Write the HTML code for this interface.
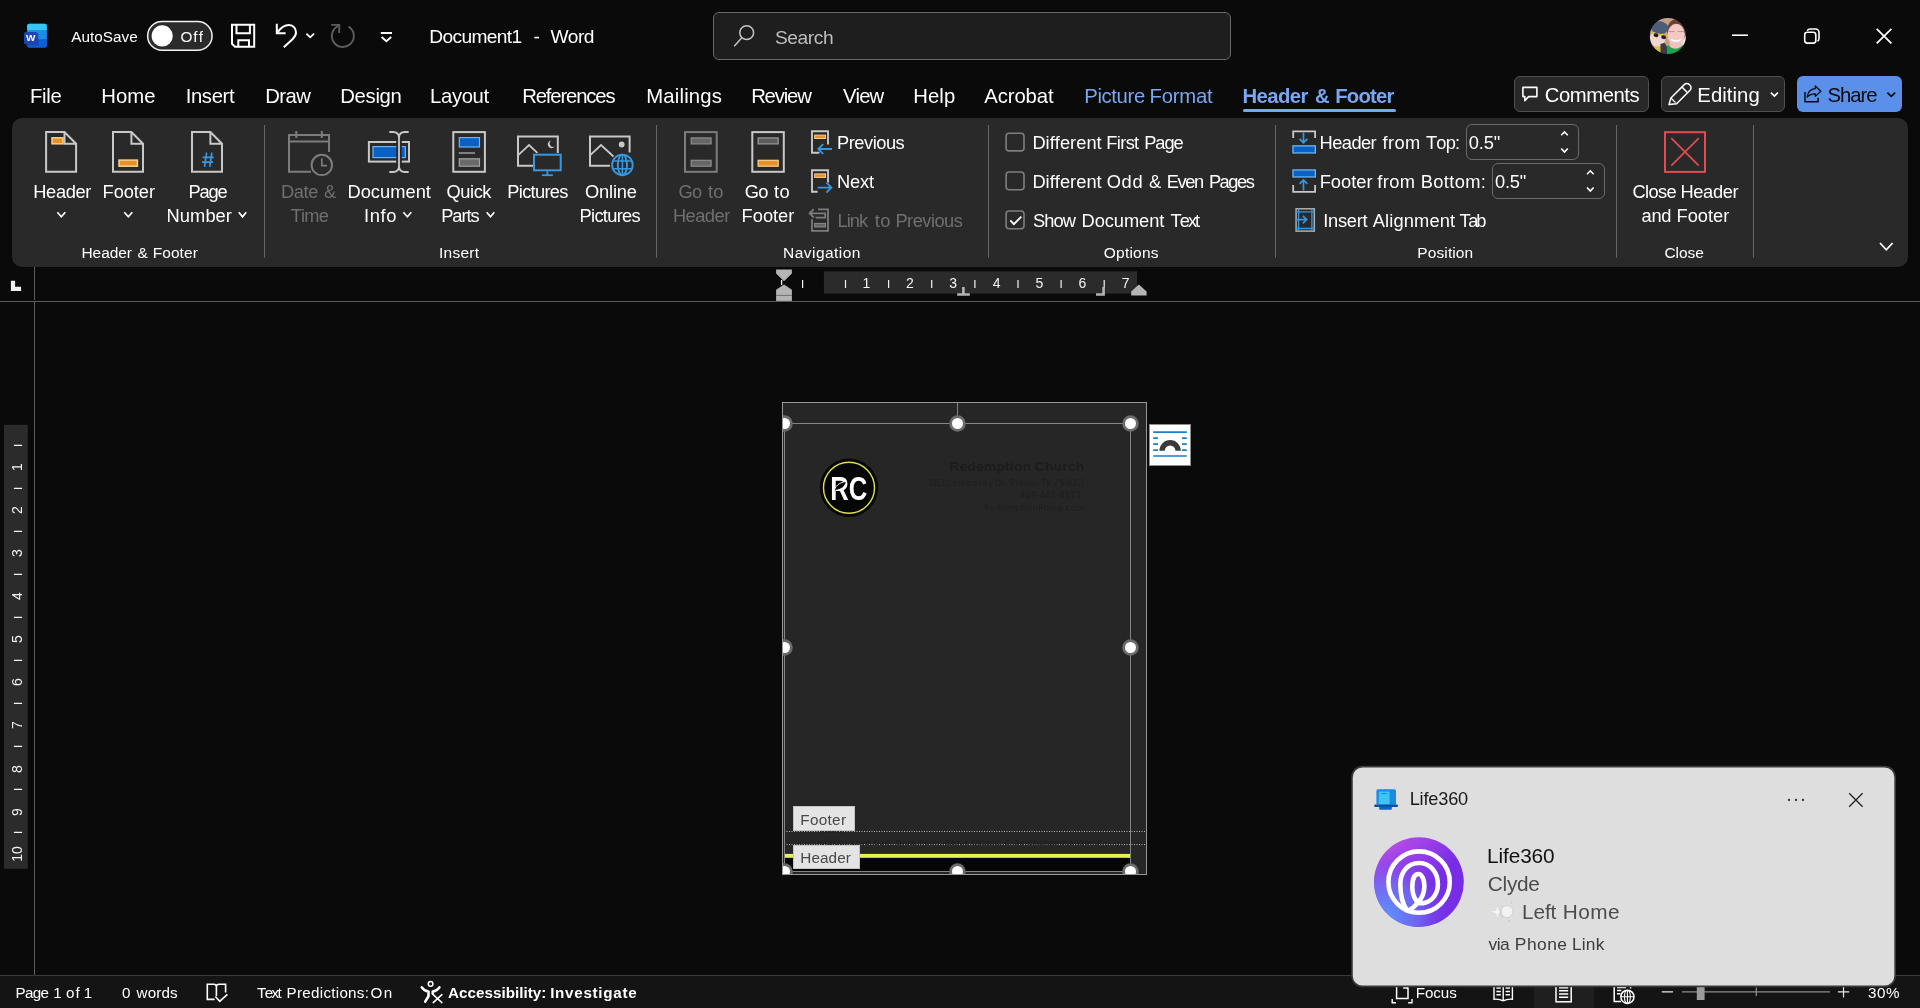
<!DOCTYPE html>
<html lang="en"><head><meta charset="utf-8"><title>Document1 - Word</title>
<style>
*{box-sizing:border-box;margin:0;padding:0}
html,body{width:1920px;height:1008px;overflow:hidden;background:#0a0a0a}
body{position:relative;font-family:"Liberation Sans",sans-serif;color:#fff;font-kerning:none;-webkit-font-smoothing:antialiased}
.sec{position:absolute;overflow:visible;will-change:transform}
.ic{position:absolute;left:0;top:0;overflow:visible}
.t{position:absolute;white-space:nowrap;display:block}
.w{position:absolute;top:0;display:block}
</style></head><body>
<header class="sec titlebar" style="left:0px;top:0px;width:1920px;height:72px;background:#0a0a0a;">
<div style="position:absolute;left:713px;top:12px;width:518px;height:48px;background:#1e1e1e;border:1px solid #686868;border-radius:6px"></div>
<svg class="ic" width="1920" height="72" viewBox="0 0 1920 72" fill="none" stroke-linecap="butt" stroke-linejoin="miter">
<g stroke="none">
<rect x="27.1" y="23.8" width="19.7" height="23.6" rx="2" fill="#1a5fd0"/>
<path d="M29.1 23.8H44.8a2 2 0 0 1 2 2V30.4H27.1V25.8a2 2 0 0 1 2-2z" fill="#38c6f4"/>
<rect x="27.1" y="30.4" width="19.7" height="9" fill="#1b8de4"/>
<path d="M27.1 39.4H46.8V45.4a2 2 0 0 1-2 2H29.1a2 2 0 0 1-2-2z" fill="#0f5fd2"/>
<rect x="27.1" y="33" width="11.5" height="12.6" fill="#0a3a9a" opacity=".45"/>
<rect x="24" y="32" width="13.5" height="12.6" rx="2" fill="#1b44b4"/>
<text x="26" y="41.4" font-family="Liberation Sans, sans-serif" font-weight="700" font-size="9.6" fill="#fff" textLength="9.4" lengthAdjust="spacingAndGlyphs">W</text>
</g>
<rect x="147.65" y="21.55" width="64.4" height="28.7" rx="14.35" fill="#2b2b2b" stroke="#f2f2f2" stroke-width="1.5"/><circle cx="162.2" cy="35.9" r="10.6" fill="#fff"/>
<g stroke="#fff" stroke-width="2"><path d="M232 24.8H254.2V46.75H235L232 43.8Z"/><path d="M236.5 24.8V33.2H249.9V24.8"/><path d="M238.3 46.75V40.3H249V46.75"/></g>
<g stroke="#fff" stroke-width="2"><path d="M276.8 23.8V33.2H285.6"/><path d="M277.3 32.7C280.5 28 284.5 25 289 25C293.5 25 296 28.8 296 32.5C296 35.5 294.5 37.3 292.5 39.2L283.8 47.2"/></g>
<path d="M306.4 33.7L310.2 37.3L314.1 33.7" stroke="#fff" stroke-width="1.8"/>
<g stroke="#5c5c5c" stroke-width="1.9"><path d="M348.6 26.6A11 11 0 1 1 339.2 25.6"/><path d="M331.2 24.9H339.2V32.9"/></g>
<g stroke="#fff" stroke-width="2"><path d="M380.8 33H392"/><path d="M381.6 37L386.4 41.2L391.2 37" stroke-width="1.9"/></g>
<g stroke="#c4c4c4" stroke-width="1.5"><circle cx="746.7" cy="32.7" r="6.9"/><path d="M741.6 37.9L734.2 46.3"/></g>
<defs><clipPath id="avc"><circle cx="1667.9" cy="36" r="18.1"/></clipPath><filter id="avb" x="-10%" y="-10%" width="120%" height="120%"><feGaussianBlur stdDeviation="0.55"/></filter></defs>
<g clip-path="url(#avc)" stroke="none"><g filter="url(#avb)">
<rect x="1648" y="16" width="40" height="40" fill="#c2a083"/>
<rect x="1682" y="33" width="5" height="12" fill="#e6ebe6"/>
<ellipse cx="1677" cy="30.5" rx="10" ry="11.6" fill="#6a4332"/>
<ellipse cx="1676.2" cy="34.6" rx="8.7" ry="10.8" fill="#f3c8c5"/>
<rect x="1669.6" y="42.5" width="12.6" height="7" fill="#efc2be"/>
<path d="M1664.6 46.4C1668 45.2 1669.6 45.4 1670 46.6C1672 49.4 1679 49.6 1682.4 45.6C1684.4 45 1686 45.4 1688 46.4V57H1664.6Z" fill="#1fa350"/>
<path d="M1668.6 31.6H1674.4M1677.6 31.6H1684" stroke="#b08a90" stroke-width=".9"/>
<path d="M1671 39.4C1673.6 41.6 1678.6 41.6 1681 39.2" stroke="#fff" stroke-width="1.4" fill="none"/>
<ellipse cx="1657.4" cy="39.2" rx="7.8" ry="7.8" fill="#f1d5d4"/>
<ellipse cx="1659.6" cy="27.6" rx="8.8" ry="6.3" fill="#4e5c79" transform="rotate(8 1659.6 27.6)"/>
<path d="M1651.6 32.8L1667.4 36.4" stroke="#d8d030" stroke-width="1.6"/>
<ellipse cx="1656" cy="35.2" rx="2.5" ry="1.9" fill="#2b1d1f" transform="rotate(12 1656 35.2)"/><ellipse cx="1663.6" cy="37.2" rx="2.5" ry="1.9" fill="#2b1d1f" transform="rotate(12 1663.6 37.2)"/>
<rect x="1653.6" y="46.4" width="8.4" height="6" fill="#d8c23a"/>
<path d="M1660.4 44L1664.6 42.8L1667 47V55H1660.6Z" fill="#3b3b45"/>
</g></g>
<g stroke="#fff" stroke-width="1.6"><path d="M1732 35.2H1747.9"/><rect x="1804.7" y="32.3" width="11.1" height="10.8" rx="2.6"/><path d="M1807.3 30.8Q1807.9 29 1810.2 29H1815.6A3.4 3.4 0 0 1 1819 32.4V38.4Q1819 40.4 1817.3 40.9"/><path d="M1876.7 28.8L1891.4 43.3M1891.4 28.8L1876.7 43.3" stroke-width="1.7"/></g>
</svg>
<span class="t" style="left:71.37px;letter-spacing:-0.005px;top:27.90px;font-size:15.3px;line-height:17px;">AutoSave</span>
<span class="t" style="left:180.38px;letter-spacing:1.100px;top:27.90px;font-size:15.3px;line-height:17px;">Off</span>
<span class="t" style="left:429.32px;letter-spacing:-0.659px;top:26.40px;font-size:19.2px;line-height:21px;">Document1</span>
<span class="t" style="left:533.45px;top:26.40px;font-size:19.2px;line-height:21px;">-</span>
<span class="t" style="left:550.42px;letter-spacing:-0.650px;top:26.40px;font-size:19.2px;line-height:21px;">Word</span>
<span class="t" style="left:774.93px;letter-spacing:-0.403px;top:26.90px;font-size:19.2px;line-height:21px;color:#bdbdbd;">Search</span>
</header>
<nav class="sec tabs" style="left:0px;top:72px;width:1920px;height:46px;background:#0a0a0a;">
<div style="position:absolute;left:1514.3px;top:4.4px;width:134.3px;height:35.2px;background:#282828;border:1px solid #505050;border-radius:6px"></div>
<div style="position:absolute;left:1661.4px;top:4.4px;width:123.2px;height:35.2px;background:#282828;border:1px solid #505050;border-radius:6px"></div>
<div style="position:absolute;left:1797px;top:4px;width:105.2px;height:36px;background:#5a90ea;border-radius:6px"></div>
<svg class="ic" width="1920" height="46" viewBox="0 72 1920 46" fill="none" stroke-linecap="butt" stroke-linejoin="miter">
<path d="M1522.9 87.4H1536.9V96.6H1528.6L1524.8 100.6V96.6H1522.9Z" stroke="#fff" stroke-width="1.6" stroke-linejoin="round"/>
<g stroke="#fff" stroke-width="1.5" stroke-linejoin="round"><path d="M1669 104.6L1670.9 98L1684.3 84.6A3.5 3.5 0 0 1 1689.3 84.6L1690 85.3A3.5 3.5 0 0 1 1690 90.3L1676.6 103.7Z"/><path d="M1681.9 87L1687.6 92.7"/><path d="M1670.9 98L1675.6 102.7" stroke-width="1.2"/></g>
<path d="M1770.9 92.6L1774.4 96L1777.9 92.6" stroke="#fff" stroke-width="1.7"/>
<g stroke="#0a0a0a" stroke-width="1.5" stroke-linejoin="round"><path d="M1805 92.1V101.8H1818.1V97.8"/><path d="M1807.2 97C1807.8 92 1811 89 1815.3 88.6V86L1820.8 91.2L1815.3 96.4V93.8C1811.6 93.8 1809 95 1807.2 97Z" stroke-width="1.3"/><path d="M1887.4 92.7L1891.3 96.4L1895.2 92.7" stroke-width="1.7"/></g>
</svg>
<span class="t" style="left:30.03px;letter-spacing:-0.314px;top:13.00px;font-size:20.3px;line-height:22px;">File</span>
<span class="t" style="left:101.13px;letter-spacing:0.139px;top:13.00px;font-size:20.3px;line-height:22px;">Home</span>
<span class="t" style="left:185.63px;letter-spacing:-0.350px;top:13.00px;font-size:20.3px;line-height:22px;">Insert</span>
<span class="t" style="left:265.23px;letter-spacing:-0.585px;top:13.00px;font-size:20.3px;line-height:22px;">Draw</span>
<span class="t" style="left:340.23px;letter-spacing:-0.301px;top:13.00px;font-size:20.3px;line-height:22px;">Design</span>
<span class="t" style="left:430.03px;letter-spacing:-0.347px;top:13.00px;font-size:20.3px;line-height:22px;">Layout</span>
<span class="t" style="left:522.23px;letter-spacing:-1.146px;top:13.00px;font-size:20.3px;line-height:22px;">References</span>
<span class="t" style="left:646.13px;letter-spacing:0.206px;top:13.00px;font-size:20.3px;line-height:22px;">Mailings</span>
<span class="t" style="left:751.13px;letter-spacing:-1.169px;top:13.00px;font-size:20.3px;line-height:22px;">Review</span>
<span class="t" style="left:843.01px;letter-spacing:-0.953px;top:13.00px;font-size:20.3px;line-height:22px;">View</span>
<span class="t" style="left:913.13px;letter-spacing:0.123px;top:13.00px;font-size:20.3px;line-height:22px;">Help</span>
<span class="t" style="left:984.36px;letter-spacing:-0.112px;top:13.00px;font-size:20.3px;line-height:22px;">Acrobat</span>
<span class="t" style="left:0;top:13.00px;font-size:20.3px;line-height:22px;color:#7aa7f2;"><span class="w" style="left:1084.23px;letter-spacing:-0.352px;">Picture</span> <span class="w" style="left:1149.53px;letter-spacing:-0.235px;">Format</span></span>
<span class="t" style="left:0;top:13.00px;font-size:20.3px;line-height:22px;color:#7aa7f2;font-weight:700;"><span class="w" style="left:1242.44px;letter-spacing:-0.573px;">Header</span> <span class="w" style="left:1314.89px;">&amp;</span> <span class="w" style="left:1335.24px;letter-spacing:-0.777px;">Footer</span></span>
<div style="position:absolute;left:1243.3px;top:37.2px;width:152.6px;height:2.8px;border-radius:2px;background:#7aa7f2"></div>
<span class="t" style="left:1544.87px;letter-spacing:-0.482px;top:12.00px;font-size:20.3px;line-height:22px;">Comments</span>
<span class="t" style="left:1697.33px;letter-spacing:0.067px;top:12.00px;font-size:20.3px;line-height:22px;">Editing</span>
<span class="t" style="left:1827.58px;letter-spacing:-1.036px;top:12.00px;font-size:20.3px;line-height:22px;color:#0a0a0a;">Share</span>
</nav>
<section class="sec ribbon" style="left:12px;top:118px;width:1896px;height:149px;background:#292929;border-radius:10px;">
<div style="position:absolute;left:1454px;top:6px;width:113px;height:36px;border:1px solid #6a6a6a;border-radius:6px;background:#292929"></div>
<div style="position:absolute;left:1480px;top:45px;width:113px;height:36px;border:1px solid #6a6a6a;border-radius:6px;background:#292929"></div>
<svg class="ic" width="1896" height="149" viewBox="12 118 1896 149" fill="none" stroke-linecap="butt" stroke-linejoin="miter">
<path d="M264.5 125V257.6" stroke="#666" stroke-width="1"/>
<path d="M656.5 125V257.6" stroke="#666" stroke-width="1"/>
<path d="M988.5 125V257.6" stroke="#666" stroke-width="1"/>
<path d="M1275.5 125V257.6" stroke="#666" stroke-width="1"/>
<path d="M1616.5 125V257.6" stroke="#666" stroke-width="1"/>
<path d="M1753.5 125V257.6" stroke="#666" stroke-width="1"/>
<path d="M46.1 132.1H64.5L76.1 143.7V171.8H46.1Z M64.5 132.1V143.7H76.1" stroke="#c8c8c8" stroke-width="2"/>
<rect x="52" y="137.8" width="11" height="6" fill="#e8912b" stroke="#f8d28a" stroke-width="1.5"/>
<path d="M57.4 212.3L61.3 216.8L65.3 212.3" stroke="#fff" stroke-width="1.7"/>
<path d="M113 132.1H131.4L143 143.7V171.8H113Z M131.4 132.1V143.7H143" stroke="#c8c8c8" stroke-width="2"/>
<rect x="119" y="160.1" width="18.4" height="6.1" fill="#e8912b" stroke="#f8d28a" stroke-width="1.5"/>
<path d="M124.3 212.3L128.3 216.8L132.3 212.3" stroke="#fff" stroke-width="1.7"/>
<path d="M192 132.1H210.4L222 143.7V171.8H192Z M210.4 132.1V143.7H222" stroke="#c8c8c8" stroke-width="2"/>
<path d="M206.6 152.6L204.6 166.8M211.8 152.6L209.8 166.8M202.6 157.4H213.8M201.9 162.2H213.1" stroke="#3a96dd" stroke-width="1.7"/>
<path d="M238.8 212.3L242.5 216.8L246.2 212.3" stroke="#fff" stroke-width="1.7"/>
<g stroke="#7c7c7c" stroke-width="2"><path d="M329 152V135H289V171.8H311"/><path d="M289 141.6H329M296.3 131V138M321.8 131V138"/><circle cx="321.8" cy="164.9" r="10.2" fill="#292929"/><path d="M321.8 158.3V165.6H327" stroke-width="1.7"/></g>
<rect x="368.9" y="142" width="40.1" height="19.6" stroke="#c8c8c8" stroke-width="2"/><rect x="373" y="146.6" width="32.3" height="11" fill="#0b60c4" stroke="#6ab6f4" stroke-width="1.2"/>
<path d="M399 137V167" stroke="#292929" stroke-width="5.6"/><path d="M389.3 132H393Q399 132 399 138V166Q399 172 393 172H389.3M408.7 132H405Q399 132 399 138M399 166Q399 172 405 172H408.7" stroke="#c8c8c8" stroke-width="1.8"/>
<path d="M403.4 212.3L407.4 216.8L411.3 212.3" stroke="#fff" stroke-width="1.7"/>
<rect x="453.3" y="132.1" width="31.6" height="39.7" stroke="#c8c8c8" stroke-width="2"/><rect x="459.3" y="137.6" width="20.2" height="9.4" fill="#0b60c4" stroke="#6ab6f4" stroke-width="1.2"/><path d="M458.7 153H475" stroke="#9c9c9c" stroke-width="1.5"/><rect x="459.3" y="158.8" width="20.2" height="7.4" fill="#6a6a6a" stroke="#a2a2a2" stroke-width="1.2"/>
<path d="M486.7 212.3L490.5 216.8L494.3 212.3" stroke="#fff" stroke-width="1.7"/>
<g stroke="#c8c8c8" stroke-width="2"><path d="M533 165.8H518V136.6H557.8V153"/><path d="M518 155.4L529 145L537.4 152.8" stroke-width="1.8"/></g><path d="M551.6 140.6A3.8 3.8 0 1 0 554.6 146.6A3.1 3.1 0 0 1 551.6 140.6Z" fill="#c8c8c8" stroke="none"/>
<g stroke="#3a96dd" stroke-width="2"><rect x="534" y="154.7" width="26.7" height="15.6" fill="#292929"/><path d="M547.4 171V175" stroke-width="1.8"/><path d="M541.9 175.2H552.9" stroke-width="1.8"/></g>
<g stroke="#c8c8c8" stroke-width="2"><path d="M610 165.8H590V136.6H629.6V152.5"/><path d="M590 155.4L601 145L613.5 156.5" stroke-width="1.8"/></g><circle cx="621.7" cy="144.5" r="2.9" fill="#c8c8c8" stroke="none"/>
<g stroke="#3a96dd" stroke-width="1.9"><circle cx="622.4" cy="164.9" r="10.3" fill="#292929"/><ellipse cx="622.4" cy="164.9" rx="4.6" ry="10.3"/><path d="M622.4 154.6V175.2M613 161H631.8M613 168.8H631.8" stroke-width="1.6"/></g>
<rect x="685" y="132.1" width="31.7" height="39.7" stroke="#7c7c7c" stroke-width="2"/><rect x="691.20" y="137.90" width="19.90" height="6.00" fill="#666" stroke="#8c8c8c" stroke-width="1.2"/><rect x="691.20" y="160.30" width="19.90" height="5.90" fill="#666" stroke="#8c8c8c" stroke-width="1.2"/>
<rect x="752.3" y="132.1" width="31.5" height="39.7" stroke="#c8c8c8" stroke-width="2"/><rect x="758.10" y="137.90" width="20.10" height="6.00" fill="#5c5c5c" stroke="#9a9a9a" stroke-width="1.2"/><rect x="758.10" y="160.30" width="20.10" height="5.90" fill="#e8912b" stroke="#f8d28a" stroke-width="1.2"/>
<path d="M819.4 152.8H812V131.2H828V144.6" stroke="#c8c8c8" stroke-width="1.9"/><rect x="814.70" y="135.10" width="10.80" height="3.40" fill="#e8912b" stroke="#f8d28a" stroke-width="1"/><path d="M832 149H818.4M823.2 144.1L818.2 149L823.2 153.9" stroke="#3a96dd" stroke-width="1.8"/>
<path d="M817.6 191.7H812V170.3H828V182.6" stroke="#c8c8c8" stroke-width="1.9"/><rect x="814.70" y="173.90" width="10.80" height="3.50" fill="#e8912b" stroke="#f8d28a" stroke-width="1"/><path d="M817.6 187.6H831.2M826.4 182.7L831.4 187.6L826.4 192.5" stroke="#3a96dd" stroke-width="1.8"/>
<g stroke="#7c7c7c" stroke-width="1.8"><path d="M818 209.4H828V230.9H812V219.2"/><path d="M809.8 213.3H825.2V217.6H815.6M813.8 209.1L809.6 213.3L813.8 217.5"/></g><rect x="814.70" y="223.40" width="10.80" height="3.60" fill="#666" stroke="#8c8c8c" stroke-width="1"/>
<rect x="1006.1" y="133.2" width="17.9" height="17.7" rx="3" stroke="#7e7e7e" stroke-width="1.6"/>
<rect x="1006.1" y="172.0" width="17.9" height="17.7" rx="3" stroke="#7e7e7e" stroke-width="1.6"/>
<rect x="1006.1" y="211.0" width="17.9" height="17.7" rx="3" stroke="#7e7e7e" stroke-width="1.6"/>
<path d="M1010.3 220.3L1013.9 224.2L1021.3 216.6" stroke="#fff" stroke-width="1.8"/>
<path d="M1293.2 138V131.3H1315.1V138" stroke="#c8c8c8" stroke-width="1.8"/><path d="M1303.5 132.4V142.4M1299.6 138.8L1303.5 142.7L1307.4 138.8" stroke="#3a96dd" stroke-width="1.7"/><rect x="1292.95" y="145.85" width="22.40" height="7.10" fill="#0b60c4" stroke="#6ab6f4" stroke-width="1.3"/>
<path d="M1561.2 135.3L1564.5 131.9L1567.8 135.3M1561.2 148.5L1564.5 152L1567.8 148.5" stroke="#fff" stroke-width="1.6"/>
<rect x="1292.95" y="169.95" width="22.40" height="7.00" fill="#0b60c4" stroke="#6ab6f4" stroke-width="1.3"/><path d="M1303.5 190.4V180.2M1299.6 183.8L1303.5 179.9L1307.4 183.8" stroke="#3a96dd" stroke-width="1.7"/><path d="M1293.2 185V191.8H1315.1V185" stroke="#c8c8c8" stroke-width="1.8"/>
<path d="M1587 174.2L1590.3 170.8L1593.6 174.2M1587 187.5L1590.3 191.1L1593.6 187.5" stroke="#fff" stroke-width="1.6"/>
<rect x="1296.1" y="208.8" width="18.2" height="22.3" stroke="#b0b0b0" stroke-width="1.5"/><path d="M1298.6 208.8V231.1M1311.9 208.8V231.1M1296.1 211.9H1314.3M1296.1 228.5H1314.3" stroke="#3a96dd" stroke-width="1.3"/><path d="M1295.4 219.6H1306.4M1302.8 215.8L1306.8 219.6L1302.8 223.4" stroke="#3a96dd" stroke-width="1.6"/>
<g stroke="#e24c50"><rect x="1665" y="132.2" width="40" height="39.7" stroke-width="2"/><path d="M1671.3 138.2L1698.8 165.6M1698.8 138.2L1671.3 165.6" stroke-width="1.7"/></g>
<path d="M1880 243L1886.3 249.8L1892.6 243" stroke="#fff" stroke-width="1.8"/>
</svg>
<span class="t" style="left:21.30px;letter-spacing:-0.383px;top:63.00px;font-size:18.3px;line-height:21px;">Header</span>
<span class="t" style="left:90.60px;letter-spacing:-0.077px;top:63.00px;font-size:18.3px;line-height:21px;">Footer</span>
<span class="t" style="left:176.50px;letter-spacing:-1.141px;top:63.00px;font-size:18.3px;line-height:21px;">Page</span>
<span class="t" style="left:154.60px;letter-spacing:0.064px;top:86.90px;font-size:18.3px;line-height:21px;">Number</span>
<span class="t" style="left:0;top:125.80px;font-size:15.5px;line-height:17px;"><span class="w" style="left:69.53px;letter-spacing:-0.102px;">Header</span> <span class="w" style="left:125.38px;">&amp;</span> <span class="w" style="left:140.63px;letter-spacing:0.086px;">Footer</span></span>
<span class="t" style="left:0;top:63.00px;font-size:18.3px;line-height:21px;color:#6f6f6f;"><span class="w" style="left:269.00px;letter-spacing:-0.380px;">Date</span> <span class="w" style="left:312.12px;">&amp;</span></span>
<span class="t" style="left:278.69px;letter-spacing:-0.814px;top:86.90px;font-size:18.3px;line-height:21px;color:#6f6f6f;">Time</span>
<span class="t" style="left:335.40px;letter-spacing:0.033px;top:63.00px;font-size:18.3px;line-height:21px;">Document</span>
<span class="t" style="left:351.91px;letter-spacing:0.711px;top:86.90px;font-size:18.3px;line-height:21px;">Info</span>
<span class="t" style="left:434.43px;letter-spacing:-0.409px;top:63.00px;font-size:18.3px;line-height:21px;">Quick</span>
<span class="t" style="left:429.20px;letter-spacing:-1.062px;top:86.90px;font-size:18.3px;line-height:21px;">Parts</span>
<span class="t" style="left:495.30px;letter-spacing:-0.706px;top:63.00px;font-size:18.3px;line-height:21px;">Pictures</span>
<span class="t" style="left:572.93px;letter-spacing:-0.164px;top:63.00px;font-size:18.3px;line-height:21px;">Online</span>
<span class="t" style="left:567.60px;letter-spacing:-0.720px;top:86.90px;font-size:18.3px;line-height:21px;">Pictures</span>
<span class="t" style="left:426.97px;letter-spacing:0.276px;top:125.80px;font-size:15.5px;line-height:17px;">Insert</span>
<span class="t" style="left:0;top:63.00px;font-size:18.3px;line-height:21px;color:#6f6f6f;"><span class="w" style="left:666.58px;letter-spacing:-0.823px;">Go</span> <span class="w" style="left:696.12px;letter-spacing:0.184px;">to</span></span>
<span class="t" style="left:660.90px;letter-spacing:-0.523px;top:86.90px;font-size:18.3px;line-height:21px;color:#6f6f6f;">Header</span>
<span class="t" style="left:0;top:63.00px;font-size:18.3px;line-height:21px;"><span class="w" style="left:732.68px;letter-spacing:-0.523px;">Go</span> <span class="w" style="left:762.12px;letter-spacing:0.284px;">to</span></span>
<span class="t" style="left:729.60px;letter-spacing:-0.017px;top:86.90px;font-size:18.3px;line-height:21px;">Footer</span>
<span class="t" style="left:825.10px;letter-spacing:-0.505px;top:14.00px;font-size:18.3px;line-height:21px;">Previous</span>
<span class="t" style="left:825.10px;letter-spacing:-0.197px;top:52.60px;font-size:18.3px;line-height:21px;">Next</span>
<span class="t" style="left:0;top:91.90px;font-size:18.3px;line-height:21px;color:#6f6f6f;"><span class="w" style="left:825.60px;letter-spacing:-0.999px;">Link</span> <span class="w" style="left:862.72px;letter-spacing:0.384px;">to</span> <span class="w" style="left:883.40px;letter-spacing:-0.519px;">Previous</span></span>
<span class="t" style="left:771.03px;letter-spacing:0.471px;top:125.80px;font-size:15.5px;line-height:17px;">Navigation</span>
<span class="t" style="left:0;top:13.50px;font-size:18.3px;line-height:21px;"><span class="w" style="left:1020.40px;letter-spacing:0.022px;">Different</span> <span class="w" style="left:1094.30px;letter-spacing:-0.659px;">First</span> <span class="w" style="left:1132.30px;letter-spacing:-1.141px;">Page</span></span>
<span class="t" style="left:0;top:52.50px;font-size:18.3px;line-height:21px;"><span class="w" style="left:1020.40px;letter-spacing:0.022px;">Different</span> <span class="w" style="left:1094.63px;letter-spacing:0.728px;">Odd</span> <span class="w" style="left:1136.97px;">&amp;</span> <span class="w" style="left:1154.70px;letter-spacing:-1.374px;">Even</span> <span class="w" style="left:1196.90px;letter-spacing:-1.482px;">Pages</span></span>
<span class="t" style="left:0;top:91.60px;font-size:18.3px;line-height:21px;"><span class="w" style="left:1020.97px;letter-spacing:-0.930px;">Show</span> <span class="w" style="left:1069.60px;letter-spacing:-0.081px;">Document</span> <span class="w" style="left:1158.49px;letter-spacing:-1.948px;">Text</span></span>
<span class="t" style="left:1091.77px;letter-spacing:0.229px;top:125.80px;font-size:15.5px;line-height:17px;">Options</span>
<span class="t" style="left:0;top:13.60px;font-size:18.3px;line-height:21px;"><span class="w" style="left:1307.60px;letter-spacing:-0.583px;">Header</span> <span class="w" style="left:1370.44px;letter-spacing:0.422px;">from</span> <span class="w" style="left:1413.99px;letter-spacing:-0.812px;">Top:</span></span>
<span class="t" style="left:1456.79px;letter-spacing:-0.181px;top:13.80px;font-size:18.3px;line-height:21px;">0.5&quot;</span>
<span class="t" style="left:0;top:52.60px;font-size:18.3px;line-height:21px;"><span class="w" style="left:1307.70px;">Footer</span> <span class="w" style="left:1365.24px;letter-spacing:0.422px;">from</span> <span class="w" style="left:1408.80px;letter-spacing:0.336px;">Bottom:</span></span>
<span class="t" style="left:1482.89px;letter-spacing:-0.148px;top:52.60px;font-size:18.3px;line-height:21px;">0.5&quot;</span>
<span class="t" style="left:0;top:91.80px;font-size:18.3px;line-height:21px;"><span class="w" style="left:1311.21px;letter-spacing:-0.249px;">Insert</span> <span class="w" style="left:1360.76px;letter-spacing:0.137px;">Alignment</span> <span class="w" style="left:1447.39px;letter-spacing:-2.177px;">Tab</span></span>
<span class="t" style="left:1405.33px;letter-spacing:0.105px;top:125.80px;font-size:15.5px;line-height:17px;">Position</span>
<span class="t" style="left:0;top:63.00px;font-size:18.3px;line-height:21px;"><span class="w" style="left:1620.47px;letter-spacing:-0.661px;">Close</span> <span class="w" style="left:1668.50px;letter-spacing:-0.383px;">Header</span></span>
<span class="t" style="left:0;top:87.00px;font-size:18.3px;line-height:21px;"><span class="w" style="left:1629.52px;letter-spacing:-0.238px;">and</span> <span class="w" style="left:1664.50px;">Footer</span></span>
<span class="t" style="left:1652.41px;letter-spacing:-0.038px;top:125.80px;font-size:15.5px;line-height:17px;">Close</span>
</section>
<main class="sec canvas" style="left:0px;top:267px;width:1920px;height:708px;background:#0a0a0a;">
<svg class="ic" width="1920" height="708" viewBox="0 267 1920 708" fill="none" stroke-linecap="butt" stroke-linejoin="miter">
<path d="M0 301.5H1920" stroke="#5c5c5c" stroke-width="1"/><path d="M34.5 267V300M34.5 302V975" stroke="#5c5c5c" stroke-width="1"/>
<path d="M13 280.8V288.9H21.1" stroke="#f0f0f0" stroke-width="4.2"/>
<rect x="823.9" y="271.2" width="313.2" height="22.4" fill="#2b2b2b" stroke="none"/>
<path d="M802.6 280V288M845.5 280V288M888.6 280V288M931.7 280V288M974.9 280V288M1018.0 280V288M1061.1 280V288M1104.2 280V288" stroke="#f4f4f4" stroke-width="1.2"/>
<g fill="#b4b4b4" stroke="none"><path d="M776.1 269.5H791.9V273.6L784 281.2L776.1 273.6Z"/><path d="M784 284.4L791.9 289.8V294.9H776.1V289.8Z"/><rect x="776.1" y="296" width="15.8" height="4.9"/><path d="M1138.9 284.6L1146.6 291.4V295.6H1131.2V291.4Z"/></g>
<path d="M781.6 280V285" stroke="#f4f4f4" stroke-width="1.3"/>
<rect x="776.1" y="294.9" width="15.8" height="1.1" fill="#777" stroke="none"/>
<path d="M963.4 287V294.5M957.2 294.5H969.8" stroke="#b4b4b4" stroke-width="2.6"/><path d="M1103.6 287V294.5M1096 294.5H1104.9" stroke="#b4b4b4" stroke-width="2.6"/>
<rect x="4" y="424.8" width="23.8" height="444" fill="#2b2b2b" stroke="none"/>
<path d="M13.9 445.4H22.1M13.9 488.4H22.1M13.9 531.4H22.1M13.9 574.4H22.1M13.9 617.4H22.1M13.9 660.4H22.1M13.9 703.4H22.1M13.9 746.4H22.1M13.9 789.4H22.1M13.9 832.4H22.1" stroke="#f4f4f4" stroke-width="1.4"/>
</svg>
<span class="t" style="left:862.43px;top:8.00px;font-size:14px;line-height:16px;color:#f4f4f4;">1</span>
<span class="t" style="left:905.95px;top:8.00px;font-size:14px;line-height:16px;color:#f4f4f4;">2</span>
<span class="t" style="left:949.27px;top:8.00px;font-size:14px;line-height:16px;color:#f4f4f4;">3</span>
<span class="t" style="left:992.63px;top:8.00px;font-size:14px;line-height:16px;color:#f4f4f4;">4</span>
<span class="t" style="left:1035.54px;top:8.00px;font-size:14px;line-height:16px;color:#f4f4f4;">5</span>
<span class="t" style="left:1078.54px;top:8.00px;font-size:14px;line-height:16px;color:#f4f4f4;">6</span>
<span class="t" style="left:1121.68px;top:8.00px;font-size:14px;line-height:16px;color:#f4f4f4;">7</span>
<span class="t" style="left:-2.8px;top:191.8px;width:40px;height:16px;line-height:16px;font-size:14px;text-align:center;color:#f4f4f4;transform:rotate(-90deg)">1</span>
<span class="t" style="left:-2.8px;top:234.9px;width:40px;height:16px;line-height:16px;font-size:14px;text-align:center;color:#f4f4f4;transform:rotate(-90deg)">2</span>
<span class="t" style="left:-2.8px;top:278.0px;width:40px;height:16px;line-height:16px;font-size:14px;text-align:center;color:#f4f4f4;transform:rotate(-90deg)">3</span>
<span class="t" style="left:-2.8px;top:321.1px;width:40px;height:16px;line-height:16px;font-size:14px;text-align:center;color:#f4f4f4;transform:rotate(-90deg)">4</span>
<span class="t" style="left:-2.8px;top:364.2px;width:40px;height:16px;line-height:16px;font-size:14px;text-align:center;color:#f4f4f4;transform:rotate(-90deg)">5</span>
<span class="t" style="left:-2.8px;top:407.3px;width:40px;height:16px;line-height:16px;font-size:14px;text-align:center;color:#f4f4f4;transform:rotate(-90deg)">6</span>
<span class="t" style="left:-2.8px;top:450.4px;width:40px;height:16px;line-height:16px;font-size:14px;text-align:center;color:#f4f4f4;transform:rotate(-90deg)">7</span>
<span class="t" style="left:-2.8px;top:493.5px;width:40px;height:16px;line-height:16px;font-size:14px;text-align:center;color:#f4f4f4;transform:rotate(-90deg)">8</span>
<span class="t" style="left:-2.8px;top:536.6px;width:40px;height:16px;line-height:16px;font-size:14px;text-align:center;color:#f4f4f4;transform:rotate(-90deg)">9</span>
<span class="t" style="left:-2.8px;top:578.6px;width:40px;height:16px;line-height:16px;font-size:14px;text-align:center;color:#f4f4f4;transform:rotate(-90deg)">10</span>
</main>
<article class="sec page" style="left:782px;top:402px;width:365px;height:473px;background:#262626;border:1px solid #989898;overflow:hidden;">
<svg class="ic" width="363" height="471" viewBox="783 403 363 471" fill="none" stroke-linecap="butt" stroke-linejoin="miter">
<g stroke="none"><circle cx="849" cy="487.7" r="29.2" fill="#060606"/><circle cx="849" cy="487.7" r="25.5" fill="none" stroke="#d9e24a" stroke-width="1.4"/>
<text x="830.2" y="499.7" font-family="Liberation Sans, sans-serif" font-weight="700" font-size="34" fill="#fff" textLength="37" lengthAdjust="spacingAndGlyphs">RC</text>
<path d="M834.2 492C834.6 486.5 838.5 482.6 846.3 481.4C845.3 486.8 841 489.6 835.6 490.2" fill="#060606" stroke="#fff" stroke-width=".9"/></g>
<rect x="785" y="853.9" width="345.5" height="4" fill="#e6f05a" stroke="none"/><rect x="785" y="857.9" width="345.5" height="13.3" fill="#060606" stroke="none"/>
<path d="M784 831.5H1147M784 844.6H1147" stroke="#b8b8b8" stroke-width="1" stroke-dasharray="1 1.5"/>
<rect x="784.5" y="423.5" width="346" height="448" stroke="#848484" stroke-width="1"/><path d="M957.5 402V423" stroke="#848484" stroke-width="1"/>
<g stroke="none"><circle cx="784.5" cy="423.5" r="8.3" fill="#6b6b6b"/><circle cx="784.5" cy="423.5" r="5.5" fill="#fff"/><circle cx="957.5" cy="423.5" r="8.3" fill="#6b6b6b"/><circle cx="957.5" cy="423.5" r="5.5" fill="#fff"/><circle cx="1130.5" cy="423.5" r="8.3" fill="#6b6b6b"/><circle cx="1130.5" cy="423.5" r="5.5" fill="#fff"/><circle cx="784.5" cy="647.5" r="8.3" fill="#6b6b6b"/><circle cx="784.5" cy="647.5" r="5.5" fill="#fff"/><circle cx="1130.5" cy="647.5" r="8.3" fill="#6b6b6b"/><circle cx="1130.5" cy="647.5" r="5.5" fill="#fff"/><circle cx="784.5" cy="871.5" r="8.3" fill="#6b6b6b"/><circle cx="784.5" cy="871.5" r="5.5" fill="#fff"/><circle cx="957.5" cy="871.5" r="8.3" fill="#6b6b6b"/><circle cx="957.5" cy="871.5" r="5.5" fill="#fff"/><circle cx="1130.5" cy="871.5" r="8.3" fill="#6b6b6b"/><circle cx="1130.5" cy="871.5" r="5.5" fill="#fff"/></g>
</svg>
<span class="t" style="left:0;top:55.70px;font-size:13.4px;line-height:15px;color:#1c1c1c;font-weight:700;"><span class="w" style="left:166.60px;letter-spacing:0.445px;">Redemption</span> <span class="w" style="left:251.85px;letter-spacing:0.476px;">Church</span></span>
<span class="t" style="left:0;top:74.60px;font-size:8.1px;line-height:10px;color:#1e1e1e;font-family:'DejaVu Sans',sans-serif;"><span class="w" style="left:145.31px;letter-spacing:-1.492px;">1113</span> <span class="w" style="left:164.11px;letter-spacing:0.730px;">Lombardy</span> <span class="w" style="left:212.01px;letter-spacing:0.013px;">Dr.</span> <span class="w" style="left:227.11px;letter-spacing:0.685px;">Plano,</span> <span class="w" style="left:258.12px;letter-spacing:-0.100px;">Tx</span> <span class="w" style="left:270.54px;letter-spacing:1.161px;">75023</span></span>
<span class="t" style="left:236.90px;letter-spacing:0.351px;top:87.20px;font-size:8.1px;line-height:10px;color:#1e1e1e;font-family:'DejaVu Sans',sans-serif;">469-467-8111</span>
<span class="t" style="left:201.11px;letter-spacing:0.474px;top:99.80px;font-size:8.1px;line-height:10px;color:#1e1e1e;font-family:'DejaVu Sans',sans-serif;">RedemptionPlano.com</span>
<span class="t" style="left:36.89px;letter-spacing:-0.998px;top:423.40px;font-size:7.6px;line-height:9px;color:#1f1f1f;font-weight:700;">Mission:</span>
<span class="t" style="left:37.37px;letter-spacing:0.723px;top:434.80px;font-size:7.6px;line-height:9px;color:#1e1e1e;">Vision: Love God, Grow Faith, Serve Others, &amp; Go Change the World</span>
<div style="position:absolute;left:10.3px;top:403.2px;width:61.6px;height:25.2px;background:#e4e4e4;border:1px solid #c4c4c4"></div>
<div style="position:absolute;left:10.3px;top:441.5px;width:66.5px;height:24.9px;background:#e4e4e4;border:1px solid #c4c4c4"></div>
<span class="t" style="left:17.24px;letter-spacing:0.318px;top:407.70px;font-size:15.3px;line-height:17px;color:#484848;">Footer</span>
<span class="t" style="left:17.24px;letter-spacing:0.106px;top:445.50px;font-size:15.3px;line-height:17px;color:#484848;">Header</span>
</article>
<div class="sec layoutopts" style="left:1149px;top:424px;width:42px;height:42px;background:#fff;border:1px solid #8e8e8e;">
<svg class="ic" width="40" height="40" viewBox="1150 425 40 40" fill="none" stroke-linecap="butt" stroke-linejoin="miter">
<g stroke="#1a80cc" stroke-width="1.7"><path d="M1153.2 432.1H1186.8M1153.2 456H1186.8"/><path d="M1153.2 438.1H1158M1153.2 444.1H1158M1153.2 450.1H1158M1182 438.1H1186.8M1182 444.1H1186.8M1182 450.1H1186.8"/></g><path d="M1162.1 450.8A8 8 0 0 1 1178.1 450.8" stroke="#3a3a3a" stroke-width="5.4"/>
</svg>
</div>
<footer class="sec statusbar" style="left:0px;top:975px;width:1920px;height:33px;background:#141414;border-top:1px solid #383838;">
<div style="position:absolute;left:1534px;top:0;width:60px;height:32px;background:#1f1f1f"></div>
<svg class="ic" width="1920" height="32" viewBox="0 976 1920 32" fill="none" stroke-linecap="butt" stroke-linejoin="miter">
<g stroke="#fff" stroke-width="1.6"><path d="M214.6 999.4H207.3V984.3H213.8Q216.4 984.3 216.4 986.8Q216.4 984.3 219 984.3H225.6V992.6M216.4 986.8V996"/><path d="M215.4 996.5L219.7 1001.3L227.4 994.3"/></g>
<g stroke="#fff" stroke-width="1.5" stroke-linecap="round" stroke-linejoin="round"><circle cx="430.6" cy="983.9" r="2.3"/><path d="M421.8 987.4C423.8 990.4 426.6 991.3 428.5 991.6V996.2L425.2 1001.6M439.4 987.4C437.4 990.4 434.6 991.3 432.7 991.6V993.6" stroke-width="2.6"/><path d="M433.2 994.6L441.9 1002.6M441.9 994.6L433.2 1002.6" stroke-width="1.5"/></g>
<g stroke="#fff" stroke-width="1.5"><path d="M1396.6 998.4V984H1404L1408 988V998.4Z M1404 984V988H1408"/><path d="M1392.2 999V1002.8H1396M1412 999V1002.8H1408.2" stroke-width="1.4"/></g>
<g stroke="#fff" stroke-width="1.4"><path d="M1503.2 985.6V1000.8M1503.2 985.6C1500.6 984.2 1497.6 983.8 1494 984V999.2C1497.6 999 1500.6 999.4 1503.2 1000.8M1503.2 985.6C1505.8 984.2 1508.8 983.8 1512.4 984V999.2C1508.8 999 1505.8 999.4 1503.2 1000.8"/><path d="M1496.4 988H1500.8M1496.4 991.4H1500.8M1496.4 994.8H1500.8M1505.6 988H1510M1505.6 991.4H1510M1505.6 994.8H1510" stroke-width="1.5"/></g>
<g stroke="#fff" stroke-width="1.5"><rect x="1556" y="983.6" width="15.2" height="18.2"/><path d="M1559 987.6H1568.2M1559 990.8H1568.2M1559 994H1568.2M1559 997.2H1568.2" stroke-width="1.6"/></g>
<g stroke="#fff" stroke-width="1.5"><path d="M1621 1001.4H1614.2V983.8H1630.6V988.6"/><path d="M1617 987.4H1626M1617 990.6H1621.4M1617 993.8H1620.4" stroke-width="1.5"/><circle cx="1627.4" cy="996.8" r="6.6" fill="#141414"/><ellipse cx="1627.4" cy="996.8" rx="2.9" ry="6.6" stroke-width="1.1"/><path d="M1620.8 996.8H1634M1627.4 990.2V1003.4" stroke-width="1.1"/></g>
<path d="M1661.8 991.8H1673M1837.9 991.8H1849.2M1843.5 986.2V997.4" stroke="#e8e8e8" stroke-width="1.2"/><path d="M1682 991.8H1830" stroke="#8c8c8c" stroke-width="1.3"/><path d="M1756.3 987.6V996" stroke="#8c8c8c" stroke-width="1.3"/><rect x="1696.8" y="985" width="7.8" height="15" fill="#9c9c9c" stroke="none"/>
</svg>
<span class="t" style="left:0;top:8.00px;font-size:15.2px;line-height:17px;"><span class="w" style="left:15.45px;letter-spacing:-0.626px;">Page</span> <span class="w" style="left:53.32px;">1</span> <span class="w" style="left:66.06px;letter-spacing:0.939px;">of</span> <span class="w" style="left:83.72px;">1</span></span>
<span class="t" style="left:0;top:8.00px;font-size:15.2px;line-height:17px;"><span class="w" style="left:121.92px;">0</span> <span class="w" style="left:136.52px;letter-spacing:0.145px;">words</span></span>
<span class="t" style="left:0;top:8.00px;font-size:15.2px;line-height:17px;"><span class="w" style="left:256.96px;letter-spacing:-1.570px;">Text</span> <span class="w" style="left:286.55px;letter-spacing:0.275px;">Predictions:</span> <span class="w" style="left:370.58px;letter-spacing:1.430px;">On</span></span>
<span class="t" style="left:0;top:8.00px;font-size:15.2px;line-height:17px;font-weight:700;"><span class="w" style="left:448.02px;letter-spacing:0.034px;">Accessibility:</span> <span class="w" style="left:550.18px;letter-spacing:0.713px;">Investigate</span></span>
<span class="t" style="left:1415.75px;letter-spacing:-0.074px;top:8.00px;font-size:15.2px;line-height:17px;">Focus</span>
<span class="t" style="left:1868.12px;letter-spacing:0.449px;top:8.00px;font-size:15.2px;line-height:17px;">30%</span>
</footer>
<aside class="sec toast" style="left:1351px;top:766px;width:545px;height:222px;">
<svg class="ic" width="545" height="222" viewBox="1351 766 545 222" fill="none" stroke-linecap="butt" stroke-linejoin="miter">
<rect x="1352" y="766.6" width="543.1" height="219.8" rx="10.5" fill="#dedede" stroke="#3a3a3a" stroke-width="1.6"/>
<g stroke="none"><rect x="1376.4" y="789.2" width="19.6" height="15.6" rx="1.6" fill="#1a8be0"/><rect x="1378.8" y="791.6" width="10.8" height="13" rx="1.2" fill="#3cc4f2"/><rect x="1381.6" y="793" width="5" height="1" fill="#1a8be0"/>
<rect x="1374.2" y="804.4" width="23.8" height="2.5" rx="1" fill="#0b4fa4"/><rect x="1379.2" y="806.7" width="12.6" height="3" rx=".8" fill="#0c66c0"/></g>
<g fill="#2e2e2e" stroke="none"><circle cx="1789" cy="799.9" r="1.15"/><circle cx="1796" cy="799.9" r="1.15"/><circle cx="1803" cy="799.9" r="1.15"/></g><path d="M1849.2 793.3L1862.6 806.7M1862.6 793.3L1849.2 806.7" stroke="#222" stroke-width="1.3"/>
<defs><linearGradient id="l360" x1="0.15" y1="0.08" x2="0.6" y2="0.55"><stop offset="0" stop-color="#b94ee8"/><stop offset="1" stop-color="#772de6"/></linearGradient>
<radialGradient id="l360b" cx="0.12" cy="0.9" r="0.78"><stop offset="0" stop-color="#5b97ff"/><stop offset=".5" stop-color="#6d72f4" stop-opacity=".75"/><stop offset="1" stop-color="#772de6" stop-opacity="0"/></radialGradient></defs>
<circle cx="1418.9" cy="882.1" r="44.9" fill="url(#l360)" stroke="none"/><circle cx="1418.9" cy="882.1" r="44.9" fill="url(#l360b)" stroke="none"/>
<g stroke="#fff" stroke-width="4.6" stroke-linecap="round" stroke-linejoin="round"><circle cx="1419.1" cy="882.1" r="30.7"/><path d="M1407 910.5C1402 903 1400.3 893 1400.3 884.2C1400.3 872 1408 863 1419.1 863C1430 863 1437.9 872 1437.9 884.2C1437.9 893 1433 900.5 1425 902.8C1421 903.8 1418 903 1416.5 901C1413.5 897 1412.3 892 1412.3 887C1412.3 879 1414.5 874 1418.3 874C1422 874 1424.4 880 1424.4 886.3C1424.4 893 1421.5 899 1417.5 903.2C1415 906 1412 908.8 1408.5 910.6"/></g>
<g stroke="none"><path d="M1490.8 911.8L1496 910.7L1497.3 906.2L1498.6 910.7L1502.6 911.8L1498.6 912.9L1497.3 917.4L1496 912.9Z" fill="#f6f6f6"/><path d="M1503.2 905.8A8 8 0 0 0 1503.2 917.8" fill="none" stroke="#cfcfcf" stroke-width="1.4"/><circle cx="1507" cy="911.6" r="6" fill="#f2f2f2" stroke="#d2d2d2" stroke-width="1"/><circle cx="1511.6" cy="902.6" r=".9" fill="#c8c8c8"/><circle cx="1509.4" cy="921" r=".9" fill="#c8c8c8"/></g>
</svg>
<span class="t" style="left:58.71px;letter-spacing:-0.201px;top:22.50px;font-size:18.2px;line-height:20px;color:#1a1a1a;">Life360</span>
<span class="t" style="left:136.09px;letter-spacing:-0.120px;top:77.70px;font-size:20.8px;line-height:23px;color:#111;">Life360</span>
<span class="t" style="left:136.74px;letter-spacing:-0.249px;top:105.70px;font-size:20.8px;line-height:23px;color:#4c4c4c;">Clyde</span>
<span class="t" style="left:0;top:133.70px;font-size:20.8px;line-height:23px;color:#4c4c4c;"><span class="w" style="left:171.09px;letter-spacing:-0.145px;">Left</span> <span class="w" style="left:211.79px;letter-spacing:0.449px;">Home</span></span>
<span class="t" style="left:0;top:168.40px;font-size:17.4px;line-height:20px;color:#3c3c3c;"><span class="w" style="left:137.54px;letter-spacing:-0.492px;">via</span> <span class="w" style="left:163.87px;letter-spacing:0.472px;">Phone</span> <span class="w" style="left:221.07px;letter-spacing:0.127px;">Link</span></span>
</aside>
</body></html>
